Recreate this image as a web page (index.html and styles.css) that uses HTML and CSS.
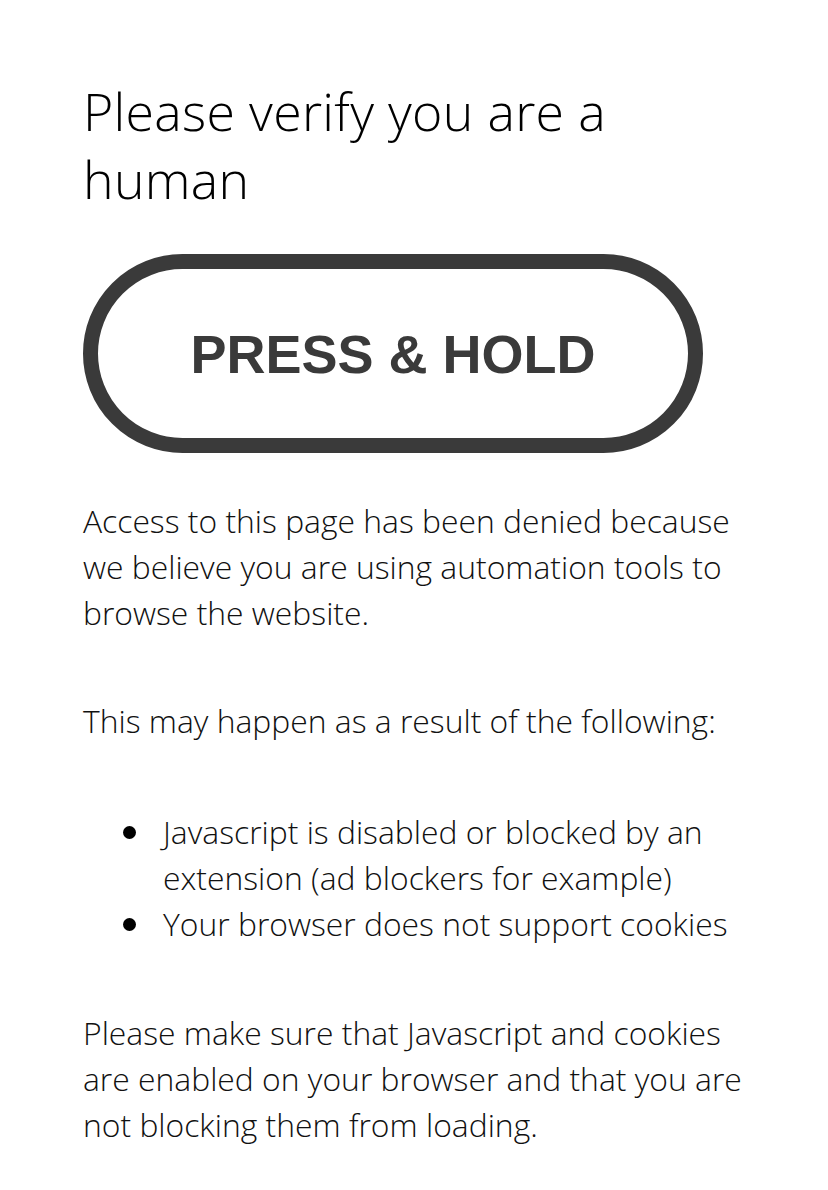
FILE: index.html
```html
<html>
<head>
	<meta charset="utf-8">
	<link rel="stylesheet" href="styles.css">
</head>

<body>
	<div class="page">
		<h1 class="title">Please verify you are a human</h1>

		<div class="hold-wrap">
			<div class="hold-button">
				<span class="hold-text">PRESS &amp; HOLD</span>
			</div>
		</div>

		<p class="text">
			Access to this page has been denied because we believe you are using automation tools to browse the website.
		</p>
		<p class="text">
			This may happen as a result of the following:
		</p>
		<ul class="reasons">
			<li>Javascript is disabled or blocked by an extension (ad blockers for example)</li>
			<li>Your browser does not support cookies</li>
		</ul>
		<p class="text">
			Please make sure that Javascript and cookies are enabled on your browser and that you are not blocking them from loading.
		</p>
	</div>
</body>

</html>
```

FILE: styles.css
```css
body{
	margin: 0;
	background-color: #ffffff;
	color: #111111;
	font-family: "Open Sans", "Liberation Sans", sans-serif;
}

.page{
	width: 680px;
	padding: 77px 0 40px 83px;
}

.title{
	margin: 0;
	font-size: 51.8px;
	font-weight: 300;
	line-height: 68px;
	color: #000000;
	letter-spacing: 0.3px;
}

.hold-wrap{
	margin-top: 41px;
	width: 620px;
}

.hold-button{
	height: 169px;
	border: 15px solid #3a3a3a;
	border-radius: 100px;
	display: flex;
	align-items: center;
	justify-content: center;
}

.hold-text{
	font-family: "Liberation Sans", Arial, sans-serif;
	font-weight: bold;
	font-size: 54px;
	color: #3a3a3a;
}

.text{
	margin: 45px 0 0 0;
	font-size: 31.85px;
	font-weight: 300;
	line-height: 46px;
}

.text + .text{
	margin-top: 62px;
}

.reasons{
	margin: 65px 0 0 0;
	padding-left: 80px;
	list-style: none;
	font-size: 31.85px;
	font-weight: 300;
	line-height: 46px;
}

.reasons li{
	position: relative;
}

/* big round bullet hanging left of each item */
.reasons li::before{
	content: "";
	position: absolute;
	left: -40px;
	top: 17px;
	width: 13px;
	height: 13px;
	border-radius: 50%;
	background-color: #000000;
}

.reasons + .text{
	margin-top: 63px;
}
```
